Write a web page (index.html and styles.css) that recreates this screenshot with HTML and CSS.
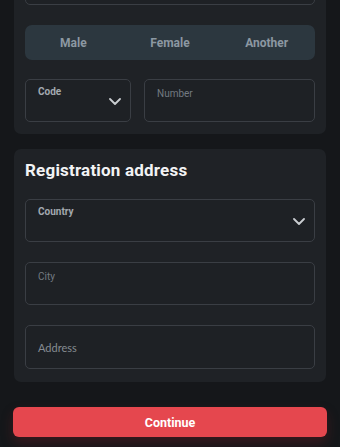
FILE: index.html
```html
<!DOCTYPE html>
<html lang="en">
<head>
<meta charset="utf-8">
<title>Registration</title>
<link rel="stylesheet" href="styles.css">
</head>
<body>
<div class="page">
  <section class="card card-top">
    <div class="field"></div>
    <div class="segment">
      <span class="seg-item">Male</span>
      <span class="seg-item">Female</span>
      <span class="seg-item">Another</span>
    </div>
    <div class="phone-row">
      <div class="field select code">
        <span class="label label-bold">Code</span>
        <svg class="chev" width="12" height="7" viewBox="0 0 12 7"><path d="M1 1l5 5 5-5" fill="none" stroke="#c9cdd1" stroke-width="1.8" stroke-linecap="round" stroke-linejoin="round"/></svg>
      </div>
      <div class="field number">
        <span class="label label-light">Number</span>
      </div>
    </div>
  </section>

  <section class="card card-address">
    <h2 class="title">Registration address</h2>
    <div class="field select country">
      <span class="label label-bold">Country</span>
      <svg class="chev" width="12" height="7" viewBox="0 0 12 7"><path d="M1 1l5 5 5-5" fill="none" stroke="#c9cdd1" stroke-width="1.8" stroke-linecap="round" stroke-linejoin="round"/></svg>
    </div>
    <div class="field city">
      <span class="label label-light">City</span>
    </div>
    <div class="field address">
      <span class="placeholder">Address</span>
    </div>
  </section>

  <button class="continue">Continue</button>
</div>
</body>
</html>
```
FILE: styles.css
```css
html, body {
  margin: 0;
  padding: 0;
  background: #15171a;
  height: 100%;
  overflow: hidden;
}
body {
  font-family: Roboto, "Noto Sans", "Liberation Sans", sans-serif;
}
.page {
  padding: 0 13px;
  display: flex;
  flex-direction: column;
}
.card {
  background: #1f2226;
  border-radius: 7px;
  margin: 0 1px;
  padding: 0 11px;
  display: flex;
  flex-direction: column;
}
.card-top {
  margin-top: -50px;
  padding-top: 11px;
  padding-bottom: 12px;
}
.field {
  box-sizing: border-box;
  height: 44px;
  border: 1px solid #3a3e44;
  border-radius: 5px;
  background: #1e2125;
  position: relative;
  display: flex;
}
.segment {
  margin-top: 20px;
  height: 35px;
  background: #2c373f;
  border-radius: 7px;
  display: grid;
  grid-template-columns: 1fr 1fr 1fr;
  align-items: center;
}
.seg-item {
  text-align: center;
  font-size: 12px;
  font-weight: 700;
  color: #8c98a2;
}
.phone-row {
  margin-top: 19px;
  display: flex;
  gap: 13px;
}
.phone-row .field {
  height: 43px;
}
.code {
  width: 106px;
  flex: none;
}
.number {
  flex: 1;
}
.label {
  font-size: 10px;
  line-height: 12px;
}
.label-bold {
  font-weight: 700;
  color: #a3a9af;
  padding: 6px 0 0 12px;
}
.label-light {
  font-weight: 400;
  color: #737a81;
  padding: 8px 0 0 12px;
}
.chev {
  position: absolute;
  right: 9px;
  top: 50%;
  margin-top: -3px;
}
.title {
  margin: 0;
  padding-top: 11px;
  font-size: 17px;
  line-height: 21px;
  font-weight: 700;
  color: #f2f3f4;
  letter-spacing: 0.2px;
}
.card-address {
  margin-top: 15px;
  padding-bottom: 13px;
  gap: 20px;
}
.country {
  margin-top: -2px;
  height: 43px;
}
.city {
  height: 43px;
}
.address {
  align-items: center;
}
.placeholder {
  font-family: Lato, "Noto Sans", sans-serif;
  font-size: 11px;
  color: #858b91;
  padding-left: 12px;
}
.continue {
  margin-top: 25px;
  height: 30px;
  border: none;
  border-radius: 6px;
  background: #e5474e;
  color: #ffffff;
  font-family: Roboto, "Noto Sans", sans-serif;
  font-size: 12.5px;
  font-weight: 700;
  box-shadow: 0 6px 12px rgba(120, 30, 35, 0.35);
}
```
